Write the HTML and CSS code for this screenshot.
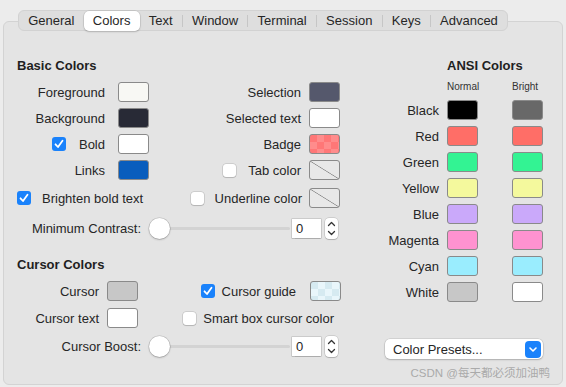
FILE: index.html
```html
<!DOCTYPE html>
<html lang="en">
<head>
    <meta charset="UTF-8">
    <meta name="viewport" content="width=device-width, initial-scale=1.0">
    <title>Profiles - Colors</title>
    <link rel="stylesheet" href="styles.css">
</head>
<body>

    <div class="panel">
        <nav class="tabs">
            <span class="tab">General</span>
            <span class="tab active">Colors</span>
            <span class="tab">Text</span>
            <span class="tab-sep"></span>
            <span class="tab">Window</span>
            <span class="tab-sep"></span>
            <span class="tab">Terminal</span>
            <span class="tab-sep"></span>
            <span class="tab">Session</span>
            <span class="tab-sep"></span>
            <span class="tab">Keys</span>
            <span class="tab-sep"></span>
            <span class="tab">Advanced</span>
        </nav>

        <div class="content">
            <div class="left">
                <h2 class="heading">Basic Colors</h2>
                <div class="basic-grid">
                    <span class="cell-a">Foreground</span>
                    <span class="swatch sw-fg"></span>
                    <span class="cell-b">Selection</span>
                    <span class="swatch sw-sel"></span>

                    <span class="cell-a">Background</span>
                    <span class="swatch sw-bg"></span>
                    <span class="cell-b">Selected text</span>
                    <span class="swatch sw-white"></span>

                    <span class="cell-a"><span class="check on"></span>Bold</span>
                    <span class="swatch sw-white"></span>
                    <span class="cell-b">Badge</span>
                    <span class="swatch sw-badge"></span>

                    <span class="cell-a">Links</span>
                    <span class="swatch sw-links"></span>
                    <span class="cell-b"><span class="check"></span>Tab color</span>
                    <span class="swatch sw-none"></span>
                </div>

                <div class="extra-grid">
                    <span class="cell-start"><span class="check on"></span>Brighten bold text</span>
                    <span class="cell-b"><span class="check"></span>Underline color</span>
                    <span class="swatch sw-none"></span>
                </div>

                <div class="slider-row contrast">
                    <span class="slider-label">Minimum Contrast:</span>
                    <div class="slider"><span class="knob"></span><span class="track"></span></div>
                    <span class="num-field">0</span>
                    <span class="stepper">
                        <svg width="13" height="21" viewBox="0 0 13 21"><path d="M3.5 7.5 L6.5 4.5 L9.5 7.5" fill="none" stroke="#333" stroke-width="1.3" stroke-linecap="round" stroke-linejoin="round"/><path d="M3.5 13.5 L6.5 16.5 L9.5 13.5" fill="none" stroke="#333" stroke-width="1.3" stroke-linecap="round" stroke-linejoin="round"/></svg>
                    </span>
                </div>

                <h2 class="heading cursor-heading">Cursor Colors</h2>
                <div class="cursor-grid">
                    <span class="cell-c">Cursor</span>
                    <span class="swatch sw-cursor"></span>
                    <span class="cell-d"><span class="check on"></span>Cursor guide</span>
                    <span class="swatch sw-guide"></span>

                    <span class="cell-c">Cursor text</span>
                    <span class="swatch sw-white"></span>
                    <span class="cell-e"><span class="check"></span>Smart box cursor color</span>
                </div>

                <div class="slider-row boost">
                    <span class="slider-label">Cursor Boost:</span>
                    <div class="slider"><span class="knob"></span><span class="track"></span></div>
                    <span class="num-field">0</span>
                    <span class="stepper">
                        <svg width="13" height="21" viewBox="0 0 13 21"><path d="M3.5 7.5 L6.5 4.5 L9.5 7.5" fill="none" stroke="#333" stroke-width="1.3" stroke-linecap="round" stroke-linejoin="round"/><path d="M3.5 13.5 L6.5 16.5 L9.5 13.5" fill="none" stroke="#333" stroke-width="1.3" stroke-linecap="round" stroke-linejoin="round"/></svg>
                    </span>
                </div>
            </div>

            <div class="ansi">
                <h2 class="heading ansi-heading">ANSI Colors</h2>
                <div class="ansi-grid">
                    <span></span>
                    <span class="col-head">Normal</span>
                    <span class="col-head">Bright</span>

                    <span class="ansi-label">Black</span>
                    <span class="swatch sw-black"></span>
                    <span class="swatch sw-gray"></span>

                    <span class="ansi-label">Red</span>
                    <span class="swatch sw-red"></span>
                    <span class="swatch sw-red"></span>

                    <span class="ansi-label">Green</span>
                    <span class="swatch sw-green"></span>
                    <span class="swatch sw-green"></span>

                    <span class="ansi-label">Yellow</span>
                    <span class="swatch sw-yellow"></span>
                    <span class="swatch sw-yellow"></span>

                    <span class="ansi-label">Blue</span>
                    <span class="swatch sw-blue"></span>
                    <span class="swatch sw-blue"></span>

                    <span class="ansi-label">Magenta</span>
                    <span class="swatch sw-magenta"></span>
                    <span class="swatch sw-magenta"></span>

                    <span class="ansi-label">Cyan</span>
                    <span class="swatch sw-cyan"></span>
                    <span class="swatch sw-cyan"></span>

                    <span class="ansi-label">White</span>
                    <span class="swatch sw-cursor"></span>
                    <span class="swatch sw-white"></span>
                </div>

                <div class="presets">
                    <span>Color Presets...</span>
                    <span class="presets-btn">
                        <svg width="16" height="17" viewBox="0 0 16 17"><path d="M5 7 L8 10 L11 7" fill="none" stroke="#fff" stroke-width="1.6" stroke-linecap="round" stroke-linejoin="round"/></svg>
                    </span>
                </div>
            </div>
        </div>
    </div>

    <div class="watermark">CSDN @每天都必须加油鸭</div>

</body>
</html>
```

FILE: styles.css
```css
/* window background and base text */
body {
    margin: 0;
    padding: 0;
    width: 566px;
    height: 387px;
    overflow: hidden;
    background-color: #ececec;
    font-family: "Liberation Sans", Arial, "Noto Sans CJK SC", sans-serif;
    font-size: 13px;
    color: #262626;
    position: relative;
}

.panel {
    box-sizing: border-box;
    margin: 21px 3px 0 3px;
    height: 364px;
    border: 1px solid #d3d3d3;
    border-radius: 6px;
    background-color: #e4e4e4;
}

/* segmented tab control */
.tabs {
    display: flex;
    align-items: center;
    width: 490px;
    box-sizing: border-box;
    height: 21px;
    margin: -12px 0 0 14px;
    background-color: #dedede;
    border: 1px solid #d2d2d2;
    border-radius: 6px;
}

.tab {
    flex: 1 1 auto;
    text-align: center;
    line-height: 19px;
    white-space: nowrap;
}

.tab.active {
    background-color: #fff;
    border-radius: 5px;
    line-height: 20px;
    box-shadow: 0 0 0 0.5px rgba(0, 0, 0, 0.12), 0 1px 2px rgba(0, 0, 0, 0.18);
}

.tab-sep {
    width: 1px;
    height: 12px;
    background-color: #c6c6c6;
}

.content {
    display: flex;
    padding: 27px 0 0 13px;
}

.left {
    width: 328px;
}

.heading {
    margin: 0 0 8px 0;
    font-size: 13px;
    line-height: 16px;
    font-weight: bold;
    color: #1f1f1f;
}

.swatch {
    display: block;
    box-sizing: border-box;
    width: 31px;
    height: 20px;
    border: 1px solid #8a8a8a;
    border-radius: 3px;
}

.sw-fg { background-color: #f8f8f4; }
.sw-bg { background-color: #282a36; }
.sw-white { background-color: #ffffff; }
.sw-links { background-color: #095dbd; }
.sw-sel { background-color: #55586c; }
.sw-badge { background: repeating-conic-gradient(#ff8c8c 0 25%, #ff7777 0 50%) 0 0 / 14px 14px; }
.sw-none { background: linear-gradient(to top right, #e8e8e8 calc(50% - 0.7px), #8a8a8a 50%, #e8e8e8 calc(50% + 0.7px)); }
.sw-cursor { background-color: #c7c7c7; }
.sw-guide { background: repeating-conic-gradient(#e9f6fb 0 25%, #d6eaf1 0 50%) 0 0 / 14px 14px; }
.sw-black { background-color: #000000; }
.sw-gray { background-color: #686868; }
.sw-red { background-color: #ff6e67; }
.sw-green { background-color: #33f393; }
.sw-yellow { background-color: #f4f99d; }
.sw-blue { background-color: #caa9fa; }
.sw-magenta { background-color: #ff92d0; }
.sw-cyan { background-color: #9aedfe; }

/* checkboxes */
.check {
    display: inline-block;
    box-sizing: border-box;
    width: 13px;
    height: 13px;
    border-radius: 3px;
    background-color: #fff;
    box-shadow: 0 0 0 0.5px rgba(0, 0, 0, 0.2), 0 1px 1px rgba(0, 0, 0, 0.12);
}

.check.on {
    width: 14px;
    height: 14px;
    background: #1a82fb url("data:image/svg+xml,%3Csvg xmlns='http://www.w3.org/2000/svg' width='14' height='14'%3E%3Cpath d='M3.5 7.3 L6 10 L10.5 3.8' fill='none' stroke='white' stroke-width='1.8' stroke-linecap='round' stroke-linejoin='round'/%3E%3C/svg%3E") center no-repeat;
    box-shadow: none;
}

/* basic colors grid */
.basic-grid {
    display: grid;
    grid-template-columns: 101px 31px 160px 31px;
    grid-auto-rows: 20px;
    row-gap: 6px;
}

.cell-a, .cell-b, .cell-c, .cell-d, .cell-e {
    display: flex;
    align-items: center;
    justify-content: flex-end;
    white-space: nowrap;
}

.cell-a {
    gap: 13px;
    padding-right: 13px;
}

.cell-b {
    gap: 12px;
    padding-right: 8px;
}

.extra-grid {
    display: grid;
    grid-template-columns: 132px 160px 31px;
    grid-auto-rows: 20px;
    margin-top: 8px;
}

.extra-grid .cell-b {
    gap: 11px;
    padding-right: 7px;
}

.cell-start {
    display: flex;
    align-items: center;
    gap: 11px;
    white-space: nowrap;
}

/* slider rows */
.slider-row {
    display: flex;
    align-items: center;
    height: 21px;
}

.contrast {
    margin-top: 10px;
}

.boost {
    margin-top: 8px;
}

.slider-label {
    width: 132px;
    box-sizing: border-box;
    padding-right: 8px;
    text-align: right;
    white-space: nowrap;
}

.slider {
    display: flex;
    align-items: center;
    width: 143px;
}

.knob {
    position: relative;
    z-index: 1;
    width: 21px;
    height: 21px;
    border-radius: 50%;
    background-color: #fff;
    box-shadow: 0 0 0 0.5px rgba(0, 0, 0, 0.18), 0 1px 2px rgba(0, 0, 0, 0.2);
}

.track {
    flex: 1;
    height: 3px;
    margin-left: -10px;
    margin-right: 2px;
    border-radius: 2px;
    background-color: #d3d3d3;
}

.num-field {
    box-sizing: border-box;
    width: 29px;
    height: 19px;
    padding-left: 4px;
    line-height: 19px;
    font-size: 13px;
    background-color: #fff;
    box-shadow: 0 0 0 0.5px rgba(0, 0, 0, 0.22), 0 0.5px 1px rgba(0, 0, 0, 0.15);
}

.stepper {
    display: block;
    width: 13px;
    height: 21px;
    margin-left: 4px;
    border-radius: 4px;
    background-color: #fff;
    box-shadow: 0 0 0 0.5px rgba(0, 0, 0, 0.2), 0 1px 1px rgba(0, 0, 0, 0.15);
}

.stepper svg {
    display: block;
}

/* cursor colors */
.cursor-heading {
    margin-top: 18px;
}

.cursor-grid {
    display: grid;
    grid-template-columns: 90px 31px 172px 31px;
    grid-auto-rows: 20px;
    row-gap: 7px;
}

.cell-c {
    padding-right: 8px;
}

.cell-d {
    gap: 7px;
    padding-right: 14px;
}

.cell-e {
    grid-column: 3 / 5;
    gap: 7px;
    padding-right: 7px;
}

/* ANSI colors */
.ansi {
    width: 158px;
    margin-left: 40px;
}

.ansi-heading {
    margin-left: 62px;
}

.ansi-grid {
    display: grid;
    grid-template-columns: 62px 65px 31px;
    grid-template-rows: 12px;
    grid-auto-rows: 20px;
    row-gap: 6px;
}

.col-head {
    font-size: 10px;
    line-height: 12px;
    color: #333;
    margin-top: -1px;
}

.ansi-label {
    display: flex;
    align-items: center;
    justify-content: flex-end;
    padding-right: 8px;
}

.presets {
    display: flex;
    align-items: center;
    justify-content: space-between;
    box-sizing: border-box;
    height: 20px;
    margin-top: 37px;
    padding: 0 2px 0 8px;
    background-color: #fff;
    border-radius: 5px;
    box-shadow: 0 0 0 0.5px rgba(0, 0, 0, 0.15), 0 1px 2px rgba(0, 0, 0, 0.18);
}

.presets-btn {
    display: block;
    width: 16px;
    height: 17px;
    border-radius: 4px;
    background-color: #1a82fb;
}

.presets-btn svg {
    display: block;
}

/* image watermark over the panel */
.watermark {
    position: absolute;
    right: 16px;
    bottom: 7px;
    color: #aaaaaa;
    font-size: 11.5px;
    font-family: "Liberation Sans", "Noto Sans CJK SC", sans-serif;
}
```
